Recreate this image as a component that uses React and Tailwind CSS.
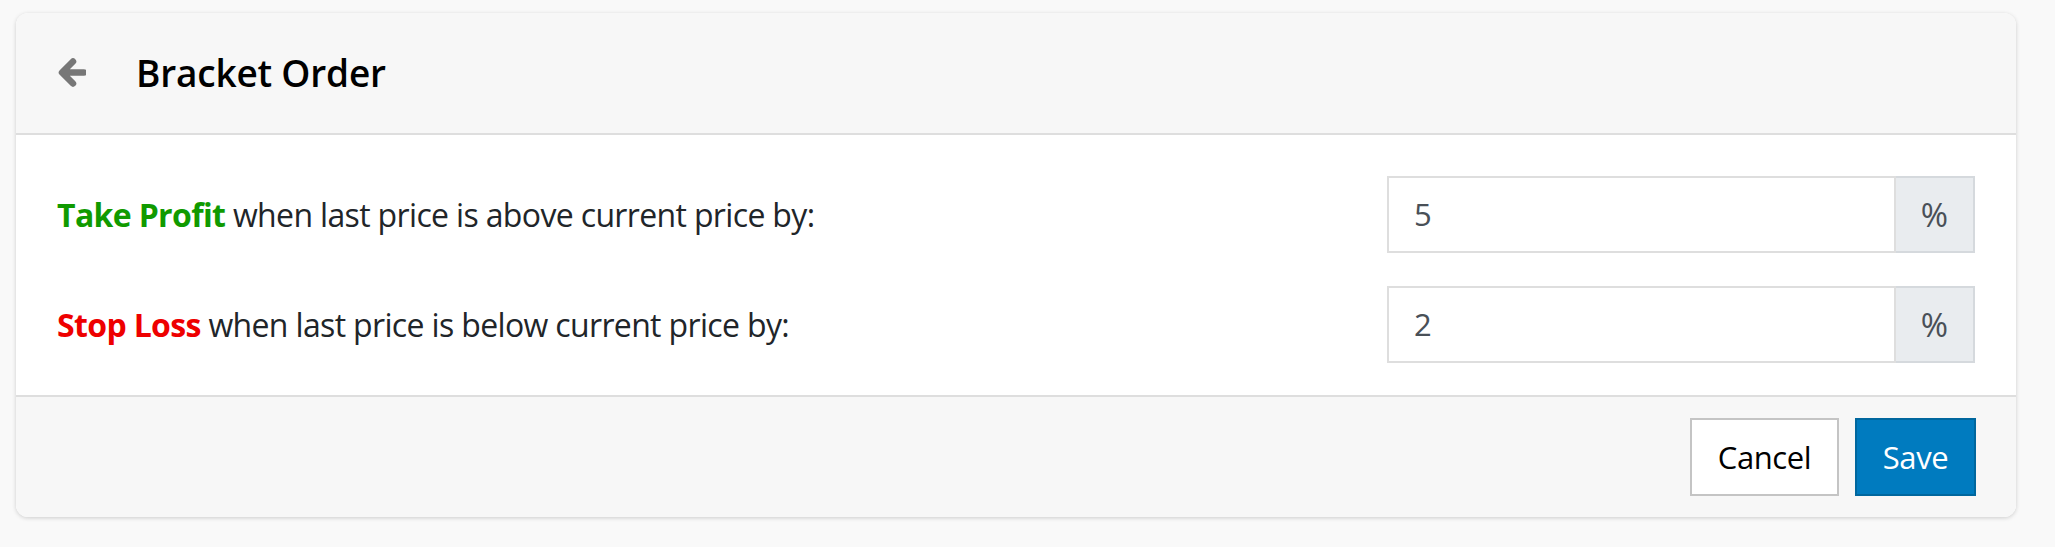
import React from "react";

function BackArrow() {
  return (
    <svg width="28" height="30" viewBox="0 0 28 30" className="block">
      <path
        d="M26 14.5 H6 M15 3.5 L4 14.5 L15 25.5"
        fill="none"
        stroke="#777777"
        strokeWidth="6.5"
        strokeLinecap="round"
        strokeLinejoin="round"
      />
    </svg>
  );
}

function Row({ label, labelColor, rest, value }) {
  return (
    <div className="flex items-center justify-between">
      <div className="text-[32px] tracking-[-0.65px] text-[#212529]">
        <span className={`font-bold ${labelColor}`}>{label}</span> {rest}
      </div>
      <div className="flex h-[77px] w-[588px]">
        <div className="flex flex-1 items-center border-2 border-[#dedede] bg-white pl-[25px] text-[31px] text-[#495057]">
          {value}
        </div>
        <div className="flex w-[79px] items-center justify-center border-2 border-l-0 border-[#d5d9dd] bg-[#e9ecef] text-[33px] text-[#495057]">
          %
        </div>
      </div>
    </div>
  );
}

export default function App() {
  return (
    <div
      className="min-h-[547px] bg-[#f9f9f9] pl-[16px] pt-[13px]"
      style={{ fontFamily: '"Open Sans", "Noto Sans", sans-serif' }}
    >
      <div className="w-[2000px] overflow-hidden rounded-[12px] bg-white shadow-[0_1px_4px_rgba(0,0,0,0.18)]">
        <div className="flex h-[122px] items-center border-b-2 border-[#dedede] bg-[#f7f7f7] pl-[42px]">
          <BackArrow />
          <h1 className="ml-[50px] text-[37px] font-semibold tracking-[-0.2px] text-black">
            Bracket Order
          </h1>
        </div>
        <div className="flex flex-col gap-[33px] px-[41px] pb-[32px] pt-[41px]">
          <Row
            label="Take Profit"
            labelColor="text-[#109a00]"
            rest="when last price is above current price by:"
            value="5"
          />
          <Row
            label="Stop Loss"
            labelColor="text-[#ee0000]"
            rest="when last price is below current price by:"
            value="2"
          />
        </div>
        <div className="flex h-[122px] items-center justify-end gap-[16px] border-t-2 border-[#dedede] bg-[#f7f7f7] pr-[40px]">
          <button className="h-[78px] w-[149px] border-2 border-[#c4c4c4] bg-white text-[31px] tracking-[-0.4px] text-black">
            Cancel
          </button>
          <button className="h-[78px] w-[121px] border-2 border-[#00679e] bg-[#007bbf] text-[31px] tracking-[-0.4px] text-white">
            Save
          </button>
        </div>
      </div>
    </div>
  );
}
